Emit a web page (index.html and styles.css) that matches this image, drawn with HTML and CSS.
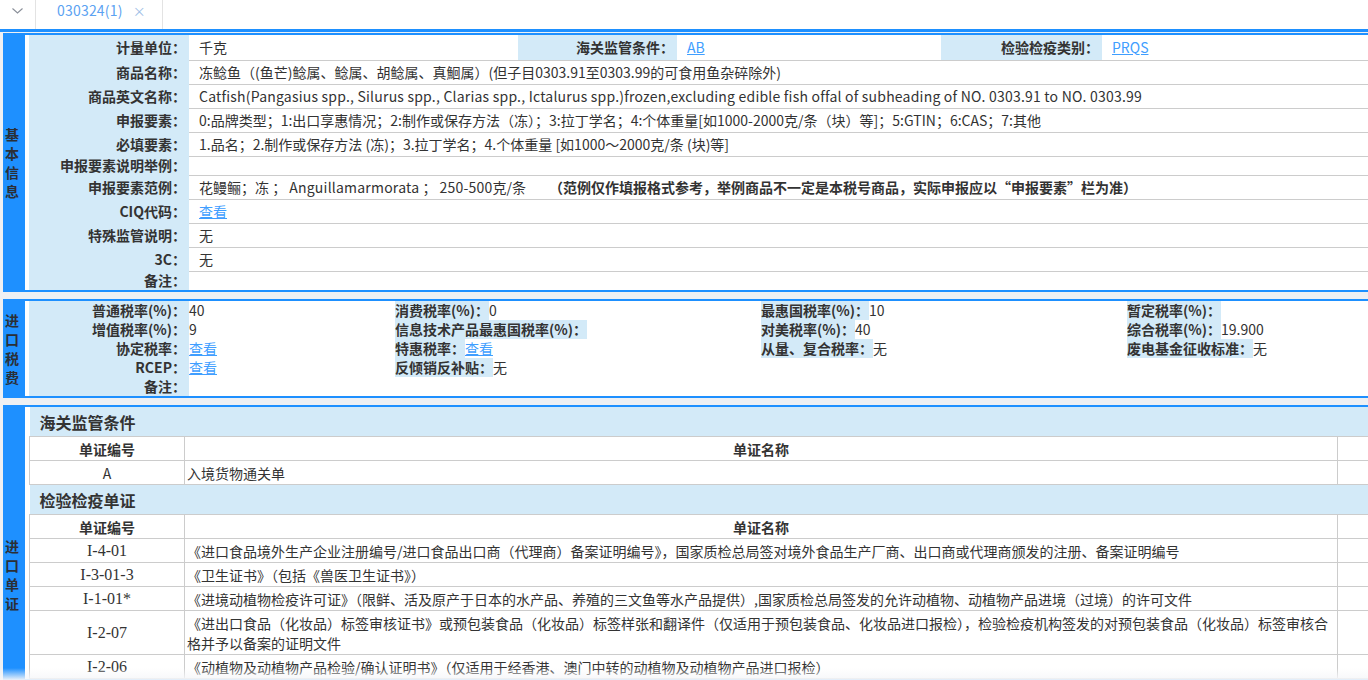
FILE: index.html
```html
<!DOCTYPE html>
<html lang="zh-CN">
<head>
<meta charset="utf-8">
<title>030324(1)</title>
<link rel="stylesheet" href="styles.css">
</head>
<body>
<div class="tabbar">
  <div class="tab-toggle">
    <svg class="chev" width="11" height="6" viewBox="0 0 11 6"><polyline points="0.5,0.5 5.5,5 10.5,0.5" fill="none" stroke="#8a8f99" stroke-width="1.1"/></svg>
  </div>
  <div class="tab"><span class="tab-name">030324(1)</span><span class="tab-close">×</span></div>
</div>

<div class="page">
  <section class="sec">
    <div class="side"><span class="side-text">基本信息</span></div>
    <div class="sec-body">
      <div class="basic">
        <div class="lab">计量单位：</div><div class="val top">千克</div>
        <div class="lab">海关监管条件：</div><div class="val top"><a class="link">AB</a></div>
        <div class="lab">检验检疫类别：</div><div class="val top"><a class="link">PRQS</a></div>

        <div class="lab">商品名称：</div><div class="val wide">冻鲶鱼（(鱼芒)鲶属、鲶属、胡鲶属、真鮰属）(但子目0303.91至0303.99的可食用鱼杂碎除外)</div>
        <div class="lab">商品英文名称：</div><div class="val wide lat">Catfish(Pangasius spp., Silurus spp., Clarias spp., Ictalurus spp.)frozen,excluding edible fish offal of subheading of NO. 0303.91 to NO. 0303.99</div>
        <div class="lab">申报要素：</div><div class="val wide">0:品牌类型；1:出口享惠情况；2:制作或保存方法（冻）；3:拉丁学名；4:个体重量[如1000-2000克/条（块）等]；5:GTIN；6:CAS；7:其他</div>
        <div class="lab">必填要素：</div><div class="val wide">1.品名；2.制作或保存方法 (冻)；3.拉丁学名；4.个体重量 [如1000～2000克/条 (块)等]</div>
        <div class="lab">申报要素说明举例：</div><div class="val wide"></div>
        <div class="lab">申报要素范例：</div><div class="val wide">花鳗鲡；冻 ； <span class="lat">Anguillamarmorata</span> ； <span class="lat">250-500</span>克/条<strong class="note">（范例仅作填报格式参考，举例商品不一定是本税号商品，实际申报应以“申报要素”栏为准）</strong></div>
        <div class="lab">CIQ代码：</div><div class="val wide"><a class="link">查看</a></div>
        <div class="lab">特殊监管说明：</div><div class="val wide">无</div>
        <div class="lab">3C：</div><div class="val wide">无</div>
        <div class="lab">备注：</div><div class="val wide"></div>
      </div>
    </div>
  </section>

  <section class="sec">
    <div class="side"><span class="side-text">进口税费</span></div>
    <div class="sec-body">
      <div class="tax">
        <div class="lab">普通税率(%)：</div><div class="tv">40</div>
        <div class="tc"><span class="tl">消费税率(%)：</span>0</div>
        <div class="tc"><span class="tl">最惠国税率(%)：</span>10</div>
        <div class="tc"><span class="tl">暂定税率(%)：</span></div>

        <div class="lab">增值税率(%)：</div><div class="tv">9</div>
        <div class="tc"><span class="tl">信息技术产品最惠国税率(%)：</span></div>
        <div class="tc"><span class="tl">对美税率(%)：</span>40</div>
        <div class="tc"><span class="tl">综合税率(%)：</span>19.900</div>

        <div class="lab">协定税率：</div><div class="tv"><a class="link">查看</a></div>
        <div class="tc"><span class="tl">特惠税率：</span><a class="link">查看</a></div>
        <div class="tc"><span class="tl">从量、复合税率：</span>无</div>
        <div class="tc"><span class="tl">废电基金征收标准：</span>无</div>

        <div class="lab">RCEP：</div><div class="tv"><a class="link">查看</a></div>
        <div class="tc"><span class="tl">反倾销反补贴：</span>无</div>
        <div class="tc"></div>
        <div class="tc"></div>

        <div class="lab">备注：</div><div class="tv"></div>
        <div class="tc"></div>
        <div class="tc"></div>
        <div class="tc"></div>
      </div>
    </div>
  </section>

  <section class="sec">
    <div class="side side-low"><span class="side-text">进口单证</span></div>
    <div class="sec-body">
      <table class="cert">
        <colgroup><col class="c-code"><col class="c-name"><col class="c-more"></colgroup>
        <tr class="grp"><td colspan="3">海关监管条件</td></tr>
        <tr class="hd"><th>单证编号</th><th>单证名称</th><th></th></tr>
        <tr><td class="code">A</td><td class="name">入境货物通关单</td><td></td></tr>
        <tr class="grp grp-next"><td colspan="3">检验检疫单证</td></tr>
        <tr class="hd"><th>单证编号</th><th>单证名称</th><th></th></tr>
        <tr><td class="code serif">I-4-01</td><td class="name">《进口食品境外生产企业注册编号/进口食品出口商（代理商）备案证明编号》，国家质检总局签对境外食品生产厂商、出口商或代理商颁发的注册、备案证明编号</td><td></td></tr>
        <tr><td class="code serif">I-3-01-3</td><td class="name">《卫生证书》（包括《兽医卫生证书》）</td><td></td></tr>
        <tr><td class="code serif">I-1-01*</td><td class="name">《进境动植物检疫许可证》（限鲜、活及原产于日本的水产品、养殖的三文鱼等水产品提供）,国家质检总局签发的允许动植物、动植物产品进境（过境）的许可文件</td><td></td></tr>
        <tr><td class="code serif">I-2-07</td><td class="name">《进出口食品（化妆品）标签审核证书》或预包装食品（化妆品）标签样张和翻译件（仅适用于预包装食品、化妆品进口报检），检验检疫机构签发的对预包装食品（化妆品）标签审核合格并予以备案的证明文件</td><td></td></tr>
        <tr><td class="code serif">I-2-06</td><td class="name">《动植物及动植物产品检验/确认证明书》（仅适用于经香港、澳门中转的动植物及动植物产品进口报检）</td><td></td></tr>
      </table>
    </div>
  </section>
</div>
<div class="fade"></div>
</body>
</html>
```

FILE: styles.css
```css
* { box-sizing: border-box; }
html, body { margin: 0; padding: 0; overflow: hidden; }
body {
  width: 1368px;
  height: 680px;
  position: relative;
  background: #eef0f3;
  font-family: "Noto Sans CJK SC", "Noto Sans", sans-serif;
  font-size: 14px;
  color: #333;
}

/* tab bar */
.tabbar {
  display: flex;
  height: 32px;
  background: #fff;
  border-bottom: 3px solid #1e90ff;
}
.tab-toggle {
  width: 36px;
  border-right: 1px solid #e3e3e3;
  display: flex;
  justify-content: center;
  padding-top: 8px;
}
.chev { display: block; }
.tab {
  width: 127px;
  border-right: 1px solid #e3e3e3;
  padding-left: 21px;
  line-height: 20px;
  color: #5ba2f2;
  white-space: nowrap;
}
.tab-name { letter-spacing: 0.2px; }
.tab-close {
  margin-left: 10px;
  color: #9cbde6;
  font-size: 13px;
}

/* page */
.page {
  width: 1500px;
  padding: 1px 0 0 3px;
}
.sec {
  display: flex;
  background: #fff;
  border-top: 2px solid #1e90ff;
  border-bottom: 2px solid #1e90ff;
  margin-bottom: 7px;
}
.side {
  width: 22px;
  flex: none;
  background: #1e90ff;
  display: flex;
  align-items: center;
  justify-content: center;
  padding-right: 4px;
}
.side-low {
  align-items: flex-start;
  padding-top: 130px;
}
.side-text {
  width: 14px;
  line-height: 19px;
  font-weight: bold;
  text-align: center;
  color: #2b2f36;
}
.sec-body {
  flex: 1;
  margin-left: 4px;
  min-width: 0;
}

.link {
  color: #409eff;
  text-decoration: underline;
  cursor: pointer;
}
.lat { letter-spacing: 0.21px; }

/* basic info */
.basic {
  display: grid;
  grid-template-columns: 160px 329px 159px 264px 161px 1fr;
}
.lab {
  background: #d3eaf8;
  font-weight: bold;
  line-height: 19px;
  padding-right: 3px;
  display: flex;
  align-items: center;
  justify-content: flex-end;
  white-space: nowrap;
}
.val {
  border-top: 1px solid #ccc;
  padding: 2px 10px;
  line-height: 19px;
  white-space: nowrap;
}
.val.top {
  border-top: 0;
  padding: 3px 10px;
}
.val.wide { grid-column: 2 / -1; }
.note {
  margin-left: 23px;
  font-weight: bold;
}

/* tax */
.tax {
  display: grid;
  grid-template-columns: 160px 206px 366px 366px 1fr;
  line-height: 19px;
}
.tv, .tc { white-space: nowrap; height: 19px; }
.tl {
  display: inline-block;
  background: #d3eaf8;
  font-weight: bold;
}

/* certificates */
.cert {
  width: 100%;
  border-collapse: collapse;
  table-layout: fixed;
}
.c-code { width: 155px; }
.c-name { width: 1153px; }
.cert td, .cert th {
  border: 1px solid #ccc;
  line-height: 20px;
  padding: 2px 2px 1px;
  vertical-align: middle;
}
.cert th { font-weight: bold; text-align: center; }
.cert tr.grp td {
  background: #d3eaf8;
  font-size: 16px;
  font-weight: bold;
  height: 29px;
  padding: 1px 10px 0;
  border-left: 0;
  border-right: 0;
}
.cert tr.grp-next td { height: 30px; }
.cert tr:first-child td { border-top: 0; }
.code { text-align: center; }
.serif {
  font-family: "Liberation Serif", serif;
  font-size: 16px;
}
.name { text-align: left; }

.fade {
  position: absolute;
  left: 0;
  right: 0;
  bottom: 0;
  height: 12px;
  background: linear-gradient(to bottom, rgba(246,247,249,0), rgba(246,247,249,0.95));
}
```
